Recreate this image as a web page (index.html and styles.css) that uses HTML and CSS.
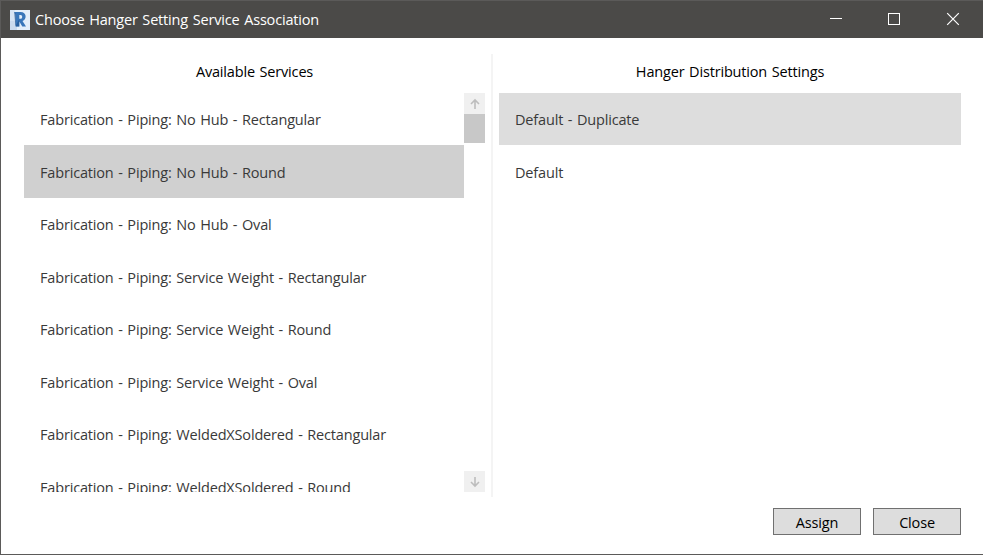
FILE: index.html
```
<!DOCTYPE html>
<html lang="en">
<head>
<meta charset="utf-8">
<title>Choose Hanger Setting Service Association</title>
<link rel="stylesheet" href="styles.css">
</head>
<body>
<div class="window">
  <header class="titlebar">
    <svg class="logo" width="20" height="20" viewBox="0 0 20 20">
      <rect width="20" height="20" fill="#e4eefa"/>
      <path d="M0 11H7V20H0z" fill="#cbdaee"/>
      <path d="M0 0H5V11H0z" fill="#d8e4f4"/>
      <path fill-rule="evenodd" fill="#3a76ba" d="M4 2H10.500C17 2 17 9.800 12.500 11L16 16.500H12.300L9.300 11.600V16.500H5.500V4.500zM9.300 5V8.800H10.500C12.800 8.800 12.800 5 10.500 5z"/>
      <path d="M4 2L6 4V16.500H9.300V9L5.500 16z" fill="#1c4d88" opacity=".55"/>
    </svg>
    <h1 class="title">Choose Hanger Setting Service Association</h1>
    <div class="controls">
      <svg width="58" height="37" viewBox="0 0 58 37"><path d="M22 17.500H34" stroke="#fff"/></svg>
      <svg width="58" height="37" viewBox="0 0 58 37"><rect x="22.500" y="12.500" width="11" height="11" fill="none" stroke="#fff"/></svg>
      <svg width="59" height="37" viewBox="0 0 59 37"><path d="M23.200 12.200L34.800 23.800M34.800 12.200L23.200 23.800" fill="none" stroke="#fff" stroke-width="1.200"/></svg>
    </div>
  </header>
  <main class="content">
    <section class="panel services">
      <h2>Available Services</h2>
      <div class="list-box">
        <ul class="list">
          <li>Fabrication - Piping: No Hub - Rectangular</li>
          <li class="selected">Fabrication - Piping: No Hub - Round</li>
          <li>Fabrication - Piping: No Hub - Oval</li>
          <li>Fabrication - Piping: Service Weight - Rectangular</li>
          <li>Fabrication - Piping: Service Weight - Round</li>
          <li>Fabrication - Piping: Service Weight - Oval</li>
          <li>Fabrication - Piping: WeldedXSoldered - Rectangular</li>
          <li>Fabrication - Piping: WeldedXSoldered - Round</li>
        </ul>
        <div class="scrollbar">
          <svg class="arrow" width="21" height="21" viewBox="0 0 21 21"><path d="M11 7V16M7 11L11 7L15 11" /></svg>
          <div class="thumb"></div>
          <svg class="arrow down" width="21" height="21" viewBox="0 0 21 21"><path d="M11 6V15M7 11L11 15L15 11" /></svg>
        </div>
      </div>
    </section>
    <div class="divider"></div>
    <section class="panel settings">
      <h2>Hanger Distribution Settings</h2>
      <ul class="list">
        <li class="selected">Default - Duplicate</li>
        <li>Default</li>
      </ul>
    </section>
  </main>
  <footer class="actions">
    <button>Assign</button>
    <button>Close</button>
  </footer>
</div>
</body>
</html>
```
FILE: styles.css
```
* { box-sizing: border-box; }
body {
  margin: 0;
  font-family: "Segoe UI", "Open Sans", "Noto Sans", sans-serif;
  font-size: 14.5px;
  letter-spacing: -0.17px;
  word-spacing: 1.05px;
}
.window {
  display: flex;
  flex-direction: column;
  width: 983px;
  height: 555px;
  overflow: hidden;
  background: #fff;
  border: 1px solid #5b5a59;
  border-right: 0;
}
.titlebar {
  display: flex;
  align-items: center;
  height: 37px;
  flex: none;
  padding-left: 9px;
  background: #4b4a48;
  color: #fff;
}
.logo { flex: none; }
.title {
  flex: 1;
  margin: 0 0 0 5px;
  font-size: inherit;
  font-weight: 400;
  line-height: 20px;
  white-space: nowrap;
}
.controls { display: flex; }
.content {
  display: flex;
  height: 459px;
  flex: none;
  padding: 16px 0 0 23px;
}
.panel h2 {
  margin: 0;
  height: 39px;
  padding-top: 8px;
  font-size: inherit;
  font-weight: 400;
  line-height: 20px;
  text-align: center;
  color: #000;
}
.services { width: 461px; }
.settings { width: 462px; margin-left: 6px; }
.divider { width: 2px; margin-left: 6px; background: #f4f4f4; }
.list-box { display: flex; height: 399px; }
.list {
  flex: 1;
  margin: 0;
  padding: 0;
  overflow: hidden;
  list-style: none;
  color: #393939;
}
.list li {
  height: 52.5px;
  padding: 17.6px 0 0 16px;
  line-height: 20px;
  white-space: nowrap;
}
.list li:first-child {
  height: 52.4px;
  padding-top: 16.6px;
}
.services .selected { background: #d0d0d0; }
.settings .selected { background: #ddd; }
.scrollbar {
  display: flex;
  flex-direction: column;
  width: 21px;
}
.arrow {
  flex: none;
  background: #f0f0f0;
  fill: none;
  stroke: #bdbdbd;
  stroke-width: 1.6;
}
.thumb { height: 29px; background: #c8c8c8; }
.down { margin-top: auto; }
.actions {
  display: flex;
  justify-content: flex-end;
  gap: 12px;
  padding: 11px 22px 0 0;
}
button {
  width: 88px;
  height: 27px;
  padding: 2px 0 0;
  border: 1px solid #707070;
  border-radius: 0;
  background: #ddd;
  color: #000;
  font: inherit;
  letter-spacing: inherit;
}
```
